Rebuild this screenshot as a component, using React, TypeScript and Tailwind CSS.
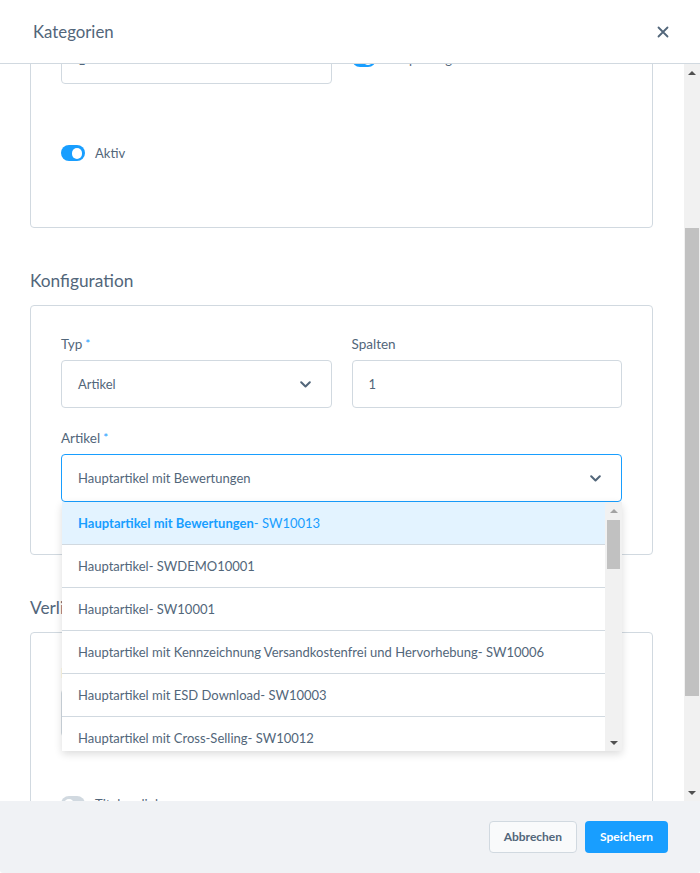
import { ReactNode } from "react";

const font = { fontFamily: "Lato, 'Liberation Sans', sans-serif" };

interface ToggleProps {
    on: boolean;
    label: string;
}

function Toggle({ on, label }: ToggleProps) {
    return (
        <div className="flex items-center gap-[10px] h-[20px]">
            <span className={`w-[24px] h-[16px] rounded-full flex items-center px-[3px] ${on ? "bg-[#189eff] justify-end" : "bg-[#d1d9e0] justify-start"}`}>
                <span className="w-[10px] h-[11px] rounded-full bg-white" />
            </span>
            <span className="text-[13px] text-[#52667a] pt-[1px]">{label}</span>
        </div>
    );
}

function Chevron() {
    return (
        <svg width="11" height="7" viewBox="0 0 11 7" fill="none">
            <path d="M1.2 1.2L5.5 5.5L9.8 1.2" stroke="#52667a" strokeWidth="2" strokeLinecap="round" strokeLinejoin="round" />
        </svg>
    );
}

function Label({ text, required }: { text: string; required?: boolean }) {
    return (
        <div className="h-[20px] mb-[6px] text-[13.5px] leading-[20px] text-[#52667a]">
            {text}
            {required && <span className="text-[#189eff] ml-[3px] text-[12px] align-top">*</span>}
        </div>
    );
}

function Input({ value, select, focused }: { value: string; select?: boolean; focused?: boolean }) {
    return (
        <div className={`h-[48px] rounded-[4px] border bg-white flex items-center justify-between pl-[16px] pr-[20px] text-[13px] text-[#52667a] ${focused ? "border-[#189eff]" : "border-[#d1d9e0]"}`}>
            <span className="pt-[1px]">{value}</span>
            {select && <Chevron />}
        </div>
    );
}

function Section({ title, children }: { title: string; children: ReactNode }) {
    return (
        <section className="mb-[40px]">
            <h2 className="text-[17.3px] leading-[26px] mb-[11px] text-[#52667a]">{title}</h2>
            <div className="relative border border-[#d1d9e0] rounded-[4px] bg-white px-[30px] pt-[28px]">
                {children}
            </div>
        </section>
    );
}

const options = [
    { name: "Hauptartikel mit Bewertungen", sku: "SW10013" },
    { name: "Hauptartikel", sku: "SWDEMO10001" },
    { name: "Hauptartikel", sku: "SW10001" },
    { name: "Hauptartikel mit Kennzeichnung Versandkostenfrei und Hervorhebung", sku: "SW10006" },
    { name: "Hauptartikel mit ESD Download", sku: "SW10003" },
    { name: "Hauptartikel mit Cross-Selling", sku: "SW10012" },
    { name: "Hauptartikel mit Staffelpreisen", sku: "SW10004" },
];

function Arrow({ up, light }: { up?: boolean; light?: boolean }) {
    return (
        <span
            className={`w-0 h-0 border-l-[4px] border-r-[4px] border-l-transparent border-r-transparent ${up ? "border-b-[4px]" : "border-t-[4px]"} ${light ? "border-b-[#a3a3a3] border-t-[#a3a3a3]" : "border-b-[#505050] border-t-[#505050]"}`}
        />
    );
}

function Dropdown() {
    return (
        <div className="absolute z-20 left-[1px] right-0 top-full h-[249px] flex bg-white shadow-[0_3px_8px_rgba(0,0,0,0.14)] overflow-hidden">
            <ul className="flex-1 min-w-0">
                {options.map((o, i) => (
                    <li
                        key={o.sku}
                        className={`h-[43px] flex items-center pl-[16px] pt-[2px] border-b border-[#d1d9e0] text-[13px] whitespace-nowrap ${i === 0 ? "bg-[#e3f3ff] text-[#189eff]" : "text-[#52667a]"}`}
                    >
                        <span className={i === 0 ? "font-bold" : ""}>{o.name}</span>
                        <span>- {o.sku}</span>
                    </li>
                ))}
            </ul>
            <div className="w-[17px] bg-[#f1f1f1] flex flex-col items-center">
                <div className="h-[17px] flex items-center justify-center"><Arrow up light /></div>
                <div className="w-[13px] h-[49px] mt-[1px] bg-[#c1c1c1]" />
                <div className="flex-1" />
                <div className="h-[17px] flex items-center justify-center"><Arrow /></div>
            </div>
        </div>
    );
}

export default function App() {
    return (
        <div style={font} className="w-[700px] h-[873px] flex flex-col bg-white overflow-hidden rounded-[3px]">
            <header className="h-[64px] shrink-0 flex items-center justify-between pl-[33px] pr-[31px] border-b border-[#d1d9e0] bg-white relative z-30">
                <h1 className="text-[16.8px] text-[#52667a]">Kategorien</h1>
                <svg width="12" height="12" viewBox="0 0 12 12">
                    <path d="M1.5 1.5L10.5 10.5M10.5 1.5L1.5 10.5" stroke="#52667a" strokeWidth="1.8" strokeLinecap="round" />
                </svg>
            </header>

            <div className="flex-1 flex min-h-0">
                <main className="flex-1 overflow-hidden">
                    <div className="-mt-[244px] pt-[30px] pl-[30px] pr-[31px] pb-[30px]">
                        <Section title="Allgemein">
                            <div className="grid grid-cols-2 gap-x-[20px]">
                                <div>
                                    <Label text="Name" required />
                                    <Input value="Genusswelten" />
                                </div>
                                <div>
                                    <Label text="Position" />
                                    <Input value="1" />
                                </div>
                            </div>
                            <div className="grid grid-cols-2 gap-x-[20px] mt-[20px]">
                                <div>
                                    <Label text="Sortierung" />
                                    <Input value="1" />
                                </div>
                                <div className="pt-[26px] h-[72px] flex items-center">
                                    <Toggle on label="Hauptkategorie" />
                                </div>
                            </div>
                            <div className="mt-[59px] pb-[64px]">
                                <Toggle on label="Aktiv" />
                            </div>
                        </Section>

                        <Section title="Konfiguration">
                            <div className="grid grid-cols-2 gap-x-[20px]">
                                <div>
                                    <Label text="Typ" required />
                                    <Input value="Artikel" select />
                                </div>
                                <div>
                                    <Label text="Spalten" />
                                    <Input value="1" />
                                </div>
                            </div>
                            <div className="mt-[20px] pb-[52px]">
                                <Label text="Artikel" required />
                                <div className="relative">
                                    <Input value="Hauptartikel mit Bewertungen" select focused />
                                    <Dropdown />
                                </div>
                            </div>
                        </Section>

                        <Section title="Verlinkung">
                            <div className="pt-[2px]">
                                <Label text="Link" />
                                <Input value="" />
                            </div>
                            <div className="mt-[57px] pb-[64px]">
                                <Toggle on={false} label="Titel verlinken" />
                            </div>
                        </Section>
                    </div>
                </main>

                <div className="w-[16px] shrink-0 bg-[#f1f1f1] flex flex-col items-center">
                    <div className="h-[17px] flex items-center justify-center"><Arrow up /></div>
                    <div className="w-[14px] h-[468px] mt-[147px] bg-[#c1c1c1]" />
                    <div className="flex-1" />
                    <div className="h-[17px] flex items-center justify-center"><Arrow /></div>
                </div>
            </div>

            <footer className="h-[72px] shrink-0 bg-[#f0f2f5] flex items-center justify-end gap-[8px] pr-[32px] relative z-30">
                <button className="h-[32px] px-[14px] rounded-[4px] border border-[#d1d9e0] bg-[#f9fafb] text-[12px] font-bold text-[#52667a]">
                    Abbrechen
                </button>
                <button className="h-[32px] px-[15px] rounded-[4px] bg-[#189eff] text-[12px] font-bold text-white">
                    Speichern
                </button>
            </footer>
        </div>
    );
}
